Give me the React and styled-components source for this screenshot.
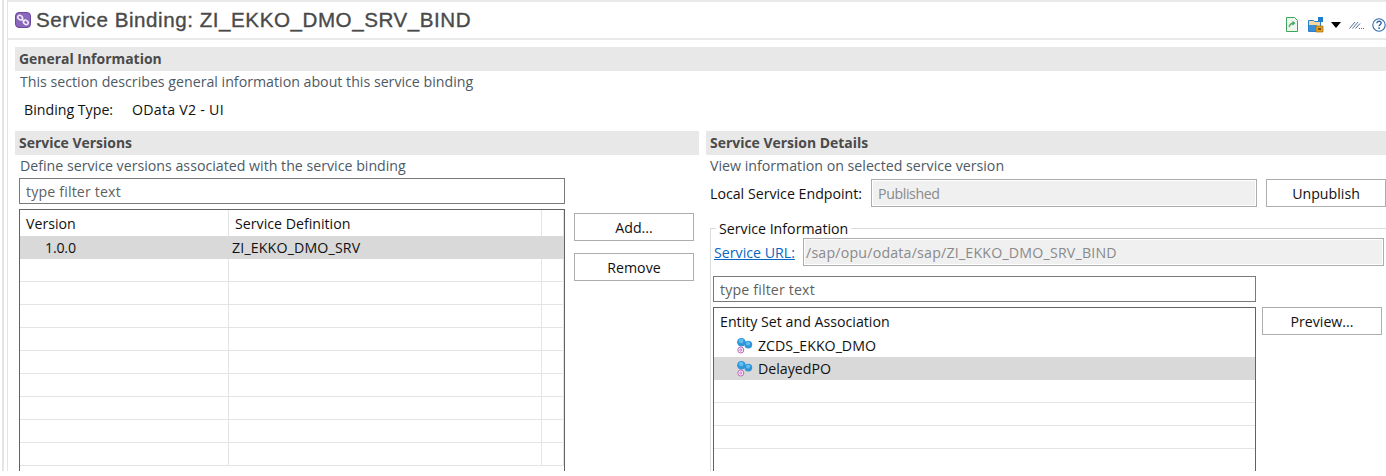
import React from "react";
import styled, { createGlobalStyle } from "styled-components";

const Global = createGlobalStyle`
  html, body { margin: 0; padding: 0; background: #fff; }
  #root { height: 476px; overflow: hidden; }
  * { box-sizing: border-box; }
`;

const Page = styled.div`
  width: 1386px;
  height: 471px;
  overflow: hidden;
  display: flex;
  font-family: "Open Sans", "Noto Sans", sans-serif;
  font-size: 14.2px;
  color: #111;
  background: #fff;
`;
const Sash = styled.div`
  width: 6px;
  flex: none;
  margin-left: 2px;
  border-left: 2px solid #e4e4e4;
  border-right: 1px solid #e4e4e4;
`;
const Editor = styled.div`
  flex: 1;
  min-width: 0;
  display: flex;
  flex-direction: column;
`;
const TitleBar = styled.header`
  height: 40px;
  flex: none;
  border-top: 2px solid #e9e9e9;
  border-bottom: 2px solid #e9e9e9;
  display: flex;
  align-items: center;
  padding: 0 0 1px 7px;
`;
const Title = styled.h1`
  margin: 0 0 0 5px;
  font: 400 20.6px "Liberation Sans", Arial, sans-serif;
  -webkit-text-stroke: 0.35px #4a4a4a;
  letter-spacing: 0.54px;
  color: #4a4a4a;
  white-space: nowrap;
`;
const Tools = styled.div`
  margin-left: auto;
  display: flex;
  align-items: center;
  padding-top: 10px;
`;
const ToolSlot = styled.span`
  display: flex;
  align-items: center;
  margin-left: ${(p) => p.$ml}px;
`;
const Body = styled.main`
  flex: 1;
  min-height: 0;
  padding: 7px 0 0 7px;
  display: flex;
  flex-direction: column;
`;
const SectionBar = styled.div`
  height: 24px;
  background: #e8e8e8;
  color: #4a4a4a;
  font-weight: 700;
  font-size: 13.95px;
  line-height: 24px;
  padding-left: 4px;
  flex: none;
  white-space: nowrap;
`;
const Description = styled.div`
  color: #4d5a66;
  height: 23px;
  line-height: 22px;
  padding-left: ${(p) => p.$indent || 5}px;
  white-space: nowrap;
  flex: none;
`;
const IntroDescription = styled(Description)`
  height: 22px;
`;
const BindingRow = styled.div`
  height: 38px;
  padding: 6px 0 0 9px;
  display: flex;
  line-height: 22px;
  flex: none;
`;
const BindingLabel = styled.span`
  width: 108px;
`;
const BindingValue = styled.span`
  letter-spacing: 0.25px;
`;
const Columns = styled.div`
  flex: 1;
  min-height: 0;
  display: grid;
  grid-template-columns: 684px 680px;
  column-gap: 7px;
`;
const Column = styled.section`
  display: flex;
  flex-direction: column;
  min-height: 0;
`;
const Filter = styled.div`
  width: ${(p) => p.$w}px;
  height: 26px;
  flex: none;
  margin-left: ${(p) => p.$ml}px;
  border: 1px solid #7a7a7a;
  color: #5f5f5f;
  padding-left: 6px;
  line-height: 25px;
  letter-spacing: 0.15px;
`;
const ListArea = styled.div`
  flex: 1;
  min-height: 0;
  display: flex;
  margin-top: 5px;
  margin-left: ${(p) => p.$ml}px;
`;
const Table = styled.div`
  width: ${(p) => p.$w}px;
  flex: none;
  border: 1px solid #636363;
  border-bottom: 0;
  overflow: hidden;
  display: flex;
  flex-direction: column;
`;
const HeadRow = styled.div`
  height: 26px;
  flex: none;
  display: grid;
  grid-template-columns: 209px 313px 1fr;
  line-height: 28px;
`;
const HeadCell = styled.div`
  border-right: 1px solid #e4e4e4;
  padding-left: 6px;
  white-space: nowrap;
`;
const Row = styled.div`
  height: 23px;
  flex: none;
  display: grid;
  grid-template-columns: 209px 313px 1fr;
  line-height: 23px;
  background: ${(p) => (p.$selected ? "#d9d9d9" : "#fff")};
  border-bottom: ${(p) => (p.$selected ? "0" : "1px solid #e4e4e4")};
`;
const Cell = styled.div`
  border-right: 1px solid ${(p) => (p.$selected ? "#d9d9d9" : "#e4e4e4")};
  padding-left: ${(p) => p.$pl}px;
  letter-spacing: ${(p) => p.$track || 0}px;
  white-space: nowrap;
`;
const ButtonStack = styled.div`
  display: flex;
  flex-direction: column;
  gap: 12px;
  margin-left: ${(p) => p.$ml}px;
  padding-top: ${(p) => p.$pt}px;
`;
const Button = styled.button`
  width: 120px;
  height: 28px;
  flex: none;
  margin-left: ${(p) => p.$ml || 0}px;
  padding: 0;
  background: #fff;
  border: 1px solid #adadad;
  font: inherit;
  color: #111;
`;
const EndpointRow = styled.div`
  display: flex;
  align-items: center;
  height: 28px;
  margin-top: 1px;
  padding-left: 4px;
  flex: none;
`;
const EndpointLabel = styled.span`
  width: 161px;
  white-space: nowrap;
`;
const ReadOnly = styled.div`
  width: ${(p) => p.$w}px;
  height: 28px;
  background: #f0f0f0;
  border: 1px solid #adadad;
  box-shadow: inset 0 0 0 1px #fff;
  color: #8a8a8a;
  line-height: 27px;
  padding-left: ${(p) => p.$pl}px;
  letter-spacing: ${(p) => p.$track}px;
  white-space: nowrap;
`;
const Group = styled.fieldset`
  flex: 1;
  min-height: 0;
  margin: 21px 0 0 4px;
  padding: 0;
  border: 0;
  border-top: 1px solid #dcdcdc;
  border-left: 1px solid #dcdcdc;
  display: flex;
  flex-direction: column;
  min-width: 0;
`;
const Legend = styled.legend`
  margin-left: 5px;
  padding: 0 3px;
  line-height: 18px;
  height: 0;
  transform: translateY(-9px);
`;
const UrlRow = styled.div`
  display: flex;
  align-items: center;
  height: 28px;
  margin-top: 9px;
  padding-left: 3px;
  flex: none;
`;
const UrlLink = styled.a`
  color: #0a66c2;
  text-decoration: underline;
  width: 89px;
  white-space: nowrap;
`;
const FilterSlot = styled.div`
  margin-top: 10px;
  flex: none;
`;
const TreeHead = styled.div`
  height: 26px;
  flex: none;
  padding-left: 6px;
  line-height: 28px;
`;
const TreeRow = styled.div`
  height: 23px;
  flex: none;
  display: flex;
  align-items: center;
  padding-left: ${(p) => p.$pl || 0}px;
  background: ${(p) => (p.$selected ? "#d9d9d9" : "#fff")};
  border-bottom: ${(p) => (p.$line ? "1px solid #e4e4e4" : "0")};
`;
const RowLabel = styled.span`
  margin-left: 4px;
  white-space: nowrap;
`;

const BindingIcon = () => (
  <svg width="16" height="16" viewBox="0 0 16 16">
    <rect x="0.5" y="0.5" width="15" height="15" rx="3.5" fill="#8a66bd" stroke="#6a4a9c" />
    <g fill="none" stroke="#f1ecf8" strokeWidth="1.5">
      <ellipse cx="5.2" cy="5.6" rx="2.6" ry="2" transform="rotate(40 5.2 5.6)" />
      <ellipse cx="10.8" cy="10.4" rx="2.6" ry="2" transform="rotate(40 10.8 10.4)" />
      <path d="M6.5 7l3 2.4" />
    </g>
  </svg>
);
const EntityIcon = () => (
  <svg width="17" height="16" viewBox="0 0 17 16">
    <circle cx="4.4" cy="4.2" r="4.3" fill="#2f96d8" />
    <circle cx="4.2" cy="3" r="2.3" fill="#62bdf0" />
    <circle cx="11.3" cy="6.6" r="3.9" fill="#2f96d8" />
    <circle cx="11.1" cy="5.6" r="2" fill="#62bdf0" />
    <circle cx="3.8" cy="12" r="3" fill="#fff" stroke="#c060b8" strokeWidth="1" />
    <circle cx="3.8" cy="12" r="1.1" fill="none" stroke="#c060b8" strokeWidth="0.9" />
  </svg>
);
const ExportIcon = () => (
  <svg width="12" height="15" viewBox="0 0 12 15">
    <path d="M.5.5h8l3 3v11H.5z" fill="#eef7ee" stroke="#3fa45b" />
    <path d="M3 10c1-3 3-4 5-4M6.5 4.5l2 1.5-2 2" fill="none" stroke="#4fa868" strokeWidth="1.3" />
  </svg>
);
const PublishIcon = () => (
  <svg width="16" height="16" viewBox="0 0 16 16">
    <path d="M.5 3.5h5l1 1h6v10H.5z" fill="#f5d9a0" stroke="#2b80c9" />
    <path d="M1 8h8v6H1z" fill="#3a8fd6" />
    <path d="M10 0h5v5h-5z" fill="#1b7fce" />
    <path d="M8 9h7v6H8z" fill="#e0a020" stroke="#a86f10" strokeWidth=".7" />
    <path d="M10 11h3v2h-3z" fill="#805010" />
  </svg>
);
const ArrowIcon = () => (
  <svg width="10" height="6" viewBox="0 0 10 6">
    <path d="M0 0h10L5 6z" fill="#000" />
  </svg>
);
const SlashIcon = () => (
  <svg width="15" height="8" viewBox="0 0 15 8">
    <path d="M.5 7.5L6 1M3.5 7.5L9 1M6.5 7.5L11 2.5" fill="none" stroke="#4f6f94" strokeWidth="1" />
    <path d="M10 7.5h1M12 7.5h1M14 7.5h1" stroke="#4f6f94" strokeWidth="1" />
  </svg>
);
const HelpIcon = () => (
  <svg width="14" height="14" viewBox="0 0 14 14">
    <circle cx="7" cy="7" r="6.2" fill="#fff" stroke="#2e6ca8" strokeWidth="1.1" />
    <path d="M4.9 5.2C5 3.8 6 3.3 7.1 3.3c1.2 0 2.1.7 2.1 1.8 0 1.5-2.1 1.5-2.1 3.2" fill="none" stroke="#2e6ca8" strokeWidth="1.4" />
    <rect x="6.3" y="9.4" width="1.6" height="1.6" fill="#2e6ca8" />
  </svg>
);

const EMPTY_TABLE = Array.from({ length: 9 });
const EMPTY_TREE = Array.from({ length: 4 });

export default function App() {
  return (
    <Page>
      <Global />
      <Sash />
      <Editor>
        <TitleBar>
          <BindingIcon />
          <Title>Service Binding: ZI_EKKO_DMO_SRV_BIND</Title>
          <Tools>
            <ToolSlot $ml={0}><ExportIcon /></ToolSlot>
            <ToolSlot $ml={10}><PublishIcon /></ToolSlot>
            <ToolSlot $ml={7}><ArrowIcon /></ToolSlot>
            <ToolSlot $ml={8}><SlashIcon /></ToolSlot>
            <ToolSlot $ml={8}><HelpIcon /></ToolSlot>
          </Tools>
        </TitleBar>
        <Body>
          <SectionBar>General Information</SectionBar>
          <IntroDescription>This section describes general information about this service binding</IntroDescription>
          <BindingRow>
            <BindingLabel>Binding Type:</BindingLabel>
            <BindingValue>OData V2 - UI</BindingValue>
          </BindingRow>
          <Columns>
            <Column>
              <SectionBar>Service Versions</SectionBar>
              <Description>Define service versions associated with the service binding</Description>
              <Filter $w={546} $ml={4}>type filter text</Filter>
              <ListArea $ml={4}>
                <Table $w={546}>
                  <HeadRow>
                    <HeadCell>Version</HeadCell>
                    <HeadCell>Service Definition</HeadCell>
                    <HeadCell />
                  </HeadRow>
                  <Row $selected>
                    <Cell $selected $pl={25} $track={-0.2}>1.0.0</Cell>
                    <Cell $selected $pl={3} $track={0.15}>ZI_EKKO_DMO_SRV</Cell>
                    <Cell $selected />
                  </Row>
                  {EMPTY_TABLE.map((_, i) => (
                    <Row key={i}><Cell /><Cell /><Cell /></Row>
                  ))}
                </Table>
                <ButtonStack $ml={9} $pt={4}>
                  <Button>Add...</Button>
                  <Button>Remove</Button>
                </ButtonStack>
              </ListArea>
            </Column>
            <Column>
              <SectionBar>Service Version Details</SectionBar>
              <Description $indent={4}>View information on selected service version</Description>
              <EndpointRow>
                <EndpointLabel>Local Service Endpoint:</EndpointLabel>
                <ReadOnly $w={386} $pl={6} $track={-0.4}>Published</ReadOnly>
                <Button $ml={9}>Unpublish</Button>
              </EndpointRow>
              <Group>
                <Legend>Service Information</Legend>
                <UrlRow>
                  <UrlLink>Service URL:</UrlLink>
                  <ReadOnly $w={581} $pl={2} $track={0.2}>/sap/opu/odata/sap/ZI_EKKO_DMO_SRV_BIND</ReadOnly>
                </UrlRow>
                <FilterSlot>
                  <Filter $w={543} $ml={2}>type filter text</Filter>
                </FilterSlot>
                <ListArea $ml={2}>
                  <Table $w={543}>
                    <TreeHead>Entity Set and Association</TreeHead>
                    <TreeRow $pl={23}><EntityIcon /><RowLabel>ZCDS_EKKO_DMO</RowLabel></TreeRow>
                    <TreeRow $pl={23} $selected><EntityIcon /><RowLabel>DelayedPO</RowLabel></TreeRow>
                    {EMPTY_TREE.map((_, i) => (
                      <TreeRow key={i} $line />
                    ))}
                  </Table>
                  <ButtonStack $ml={6} $pt={0}>
                    <Button>Preview...</Button>
                  </ButtonStack>
                </ListArea>
              </Group>
            </Column>
          </Columns>
        </Body>
      </Editor>
    </Page>
  );
}
